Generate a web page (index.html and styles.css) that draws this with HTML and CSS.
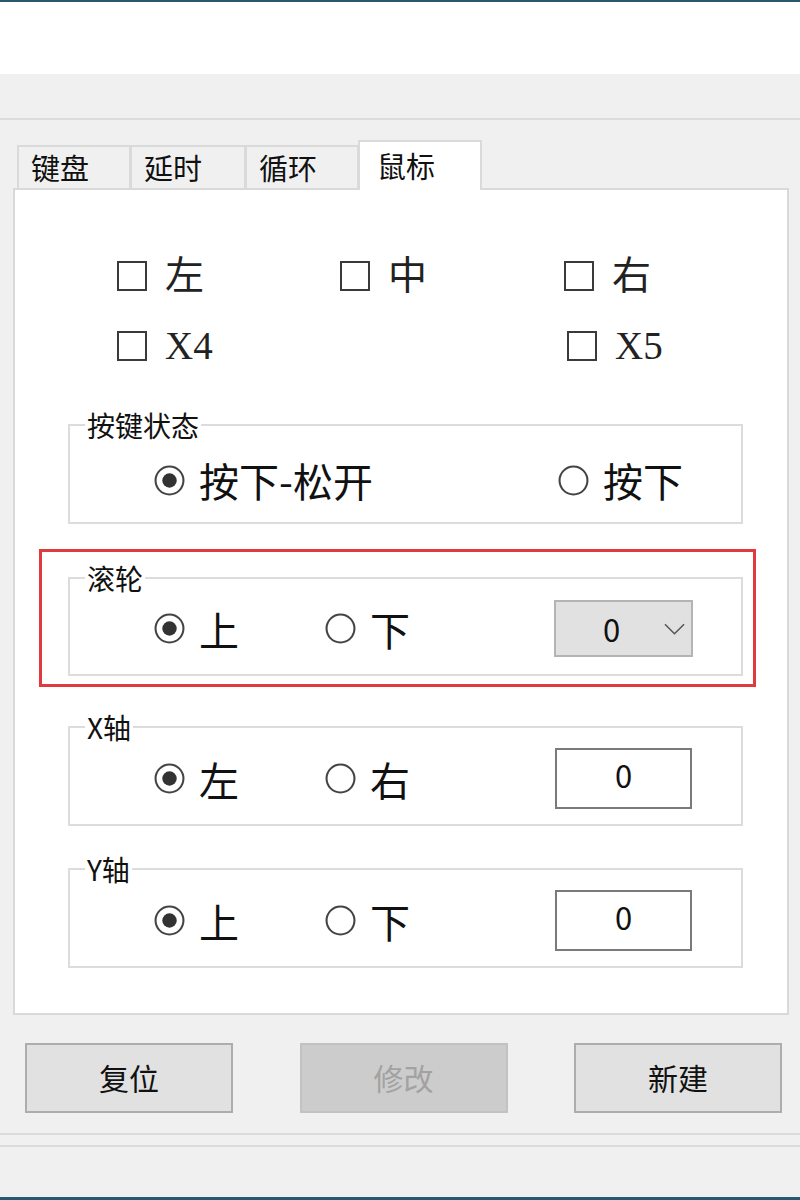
FILE: index.html
```html
<!DOCTYPE html>
<html lang="zh-CN">
<head>
<meta charset="utf-8">
<title>鼠标</title>
<link rel="stylesheet" href="styles.css">
</head>
<body>
<div class="topbar"></div>
<div class="header"></div>
<div class="toolbar"></div>
<div class="separator"></div>

<div class="tabs">
  <div class="tab">键盘</div>
  <div class="tab">延时</div>
  <div class="tab">循环</div>
  <div class="tab active">鼠标</div>
</div>

<div class="panel">
  <div class="checks">
    <label class="check"><span class="box"></span><span class="clabel">左</span></label>
    <label class="check"><span class="box"></span><span class="clabel">中</span></label>
    <label class="check"><span class="box"></span><span class="clabel">右</span></label>
  </div>
  <div class="checks second">
    <label class="check"><span class="box"></span><span class="clabel">X4</span></label>
    <span></span>
    <label class="check x5"><span class="box"></span><span class="clabel">X5</span></label>
  </div>

  <div class="group g1">
    <div class="gtitle">按键状态</div>
    <div class="row row-state">
      <label class="radio"><svg class="rdot" viewBox="0 0 30 30"><circle cx="15" cy="15" r="13.5" fill="#fff" stroke="#444" stroke-width="2"/><circle cx="15" cy="15" r="7" fill="#333"/></svg><span>按下-松开</span></label>
      <label class="radio"><svg class="rdot" viewBox="0 0 30 30"><circle cx="15" cy="15" r="13.5" fill="#fff" stroke="#444" stroke-width="2"/></svg><span>按下</span></label>
    </div>
  </div>

  <div class="highlight">
    <div class="group g2">
      <div class="gtitle">滚轮</div>
      <div class="row row-axis">
        <label class="radio"><svg class="rdot" viewBox="0 0 30 30"><circle cx="15" cy="15" r="13.5" fill="#fff" stroke="#444" stroke-width="2"/><circle cx="15" cy="15" r="7" fill="#333"/></svg><span>上</span></label>
        <label class="radio"><svg class="rdot" viewBox="0 0 30 30"><circle cx="15" cy="15" r="13.5" fill="#fff" stroke="#444" stroke-width="2"/></svg><span>下</span></label>
        <div class="combo"><span class="cval">0</span><svg class="chev" viewBox="0 0 22 12"><polyline points="1,1 11,11 21,1" fill="none" stroke="#555" stroke-width="1.6"/></svg></div>
      </div>
    </div>
  </div>

  <div class="group g3">
    <div class="gtitle">X轴</div>
    <div class="row row-axis">
      <label class="radio"><svg class="rdot" viewBox="0 0 30 30"><circle cx="15" cy="15" r="13.5" fill="#fff" stroke="#444" stroke-width="2"/><circle cx="15" cy="15" r="7" fill="#333"/></svg><span>左</span></label>
      <label class="radio"><svg class="rdot" viewBox="0 0 30 30"><circle cx="15" cy="15" r="13.5" fill="#fff" stroke="#444" stroke-width="2"/></svg><span>右</span></label>
      <div class="textbox">0</div>
    </div>
  </div>

  <div class="group g4">
    <div class="gtitle">Y轴</div>
    <div class="row row-axis">
      <label class="radio"><svg class="rdot" viewBox="0 0 30 30"><circle cx="15" cy="15" r="13.5" fill="#fff" stroke="#444" stroke-width="2"/><circle cx="15" cy="15" r="7" fill="#333"/></svg><span>上</span></label>
      <label class="radio"><svg class="rdot" viewBox="0 0 30 30"><circle cx="15" cy="15" r="13.5" fill="#fff" stroke="#444" stroke-width="2"/></svg><span>下</span></label>
      <div class="textbox">0</div>
    </div>
  </div>
</div>

<div class="buttons">
  <div class="btn">复位</div>
  <div class="btn disabled">修改</div>
  <div class="btn">新建</div>
</div>

<div class="footer">
  <div class="fline"></div>
  <div class="fline second"></div>
  <div class="fspace"></div>
  <div class="bottombar"></div>
</div>
</body>
</html>
```

FILE: styles.css
```css
* { box-sizing: border-box; }
html, body { margin: 0; padding: 0; }
body {
  width: 800px;
  height: 1200px;
  overflow: hidden;
  background: #f0f0f0;
  font-family: "Noto Sans CJK SC", "Noto Sans", sans-serif;
  color: #1a1a1a;
}
.topbar { height: 2px; background: #2c566b; }
.header { height: 72px; background: #ffffff; }
.toolbar { height: 44px; background: #f0f0f0; }
.separator { height: 2px; background: #dcdcdc; }

.tabs {
  display: flex;
  align-items: flex-end;
  height: 48px;
  margin-top: 20px;
  margin-left: 17px;
}
.tab {
  height: 43px;
  line-height: 41px;
  font-size: 29px;
  background: #f0f0f0;
  border: 2px solid #dadada;
  border-bottom: none;
  padding-left: 12px;
  width: 114px;
  color: #111;
}
.tab + .tab { margin-left: -1px; }
.tab:nth-child(2) { width: 116px; }
.tab.active {
  position: relative;
  z-index: 1;
  height: 50px;
  margin-bottom: -2px;
  line-height: 46px;
  background: #ffffff;
  width: 124px;
  padding-left: 17px;
}

.panel {
  margin-left: 13px;
  width: 776px;
  height: 827px;
  background: #ffffff;
  border: 2px solid #d9d9d9;
  padding-top: 66px;
}
.checks {
  display: grid;
  grid-template-columns: 223px 224px auto;
  padding-left: 102px;
  height: 40px;
}
.checks.second { margin-top: 30px; }
.check {
  display: flex;
  align-items: center;
  height: 40px;
}
.check.x5 { margin-left: 3px; }
.box {
  width: 30px;
  height: 30px;
  border: 2px solid #3a3a3a;
  background: #fff;
  margin-right: 18px;
  flex: none;
}
.clabel {
  font-family: "Liberation Serif", "Noto Sans CJK SC", serif;
  font-size: 39px;
  line-height: 40px;
  color: #222;
}

.group {
  margin-left: 53px;
  width: 675px;
  border: 2px solid #dcdcdc;
  background: #fff;
}
.gtitle {
  width: fit-content;
  margin-top: -16px;
  margin-left: 15px;
  padding: 0 2px;
  background: #fff;
  font-size: 28px;
  line-height: 30px;
  height: 30px;
  color: #111;
}
.row {
  display: grid;
  align-items: center;
  padding-left: 84px;
}
.row-state {
  grid-template-columns: 404px auto;
  height: 40px;
  margin-top: 18px;
}
.row-axis {
  grid-template-columns: 171px 1fr 139px;
  padding-right: 48px;
  height: 61px;
  margin-top: 6px;
}
.g1 { margin-top: 58px; padding-bottom: 24px; }
.g2 { margin-left: 0; }
.g2 .row-axis { height: 57px; margin-top: 7px; }
.g2 { padding-bottom: 17px; }
.g3 { margin-top: 39px; padding-bottom: 15px; }
.g4 { margin-top: 42px; padding-bottom: 15px; }

.highlight {
  margin-top: 25px;
  margin-left: 24px;
  width: 717px;
  border: 3px solid #e0393e;
  padding: 25px 10px 8px 26px;
}

.radio {
  display: flex;
  align-items: center;
  font-size: 40px;
  line-height: 44px;
  color: #111;
}
.rdot {
  width: 31px;
  height: 31px;
  margin-right: 14px;
  flex: none;
}

.combo {
  height: 57px;
  width: 139px;
  background: #e1e1e1;
  border: 2px solid #b4b4b4;
  display: flex;
  align-items: center;
  padding-left: 47px;
}
.cval {
  font-size: 31px;
  line-height: 40px;
  width: 20px;
  color: #111;
}
.chev {
  width: 21px;
  height: 12px;
  margin-left: 41px;
}
.textbox {
  height: 61px;
  width: 137px;
  margin-left: 1px;
  background: #fff;
  border: 2px solid #7a7a7a;
  text-align: center;
  font-size: 31px;
  line-height: 50px;
  color: #111;
}

.buttons {
  display: flex;
  gap: 66.5px;
  margin-top: 28px;
  padding-left: 25px;
}
.btn {
  width: 208px;
  height: 70px;
  background: #e1e1e1;
  border: 2px solid #adadad;
  font-size: 30px;
  line-height: 64px;
  text-align: center;
  color: #111;
}
.btn.disabled {
  background: #cccccc;
  border-color: #c2c2c2;
  color: #a2a2a2;
}

.footer { margin-top: 20px; }
.fline { height: 2px; background: #dcdcdc; }
.fline.second { margin-top: 10px; }
.fspace { height: 50px; }
.bottombar { height: 3px; background: #2c566b; }
```
